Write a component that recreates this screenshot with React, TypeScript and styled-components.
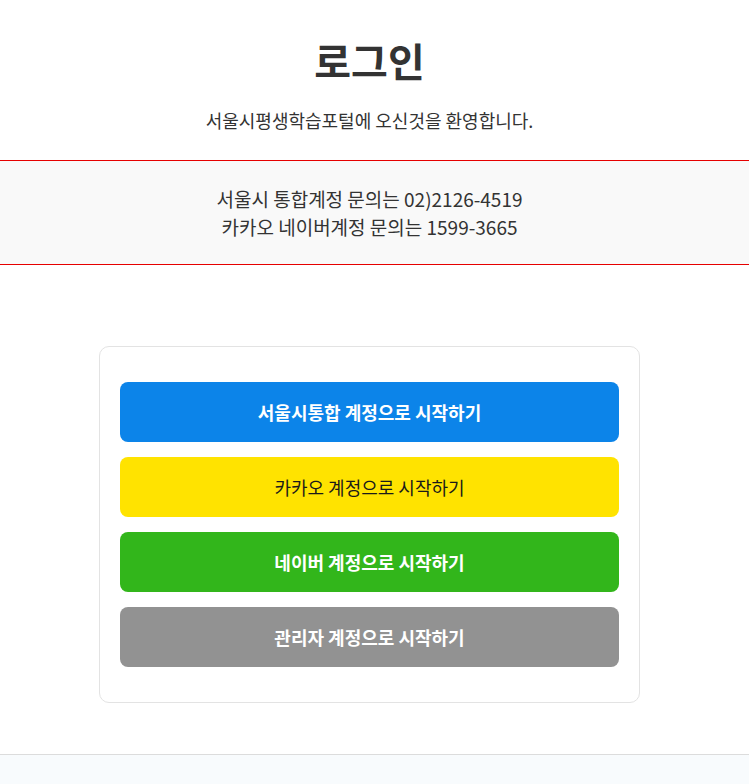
import React from "react";
import styled, { createGlobalStyle } from "styled-components";

const Global = createGlobalStyle`
  html, body { margin: 0; padding: 0; background: #fff; }
  body { font-family: "Noto Sans CJK KR", "Noto Sans", sans-serif; color: #333; }
  * { box-sizing: border-box; }
`;

const Page = styled.div`
  display: flex;
  flex-direction: column;
  min-height: 784px;
`;

const Header = styled.header`
  display: flex;
  flex-direction: column;
  align-items: center;
  padding: 35px 10px 28px 0;
`;

const Title = styled.h1`
  margin: 0;
  font-size: 40px;
  line-height: 50px;
  font-weight: 700;
  color: #333;
`;

const Subtitle = styled.p`
  margin: 23px 0 0;
  font-size: 18px;
  line-height: 24px;
  color: #333;
`;

const InfoBox = styled.section`
  border-top: 1px solid #e60000;
  border-bottom: 1px solid #e60000;
  background: #f9f9f9;
  padding: 24px 10px 23px 0;
  text-align: center;
  font-size: 19px;
  line-height: 28px;
  color: #333;
`;

const InfoLine = styled.div``;

const Main = styled.main`
  display: flex;
  justify-content: center;
  padding: 81px 10px 51px 0;
`;

const Card = styled.div`
  width: 541px;
  border: 1px solid #e3e3e3;
  border-radius: 10px;
  padding: 35px 20px;
  display: flex;
  flex-direction: column;
  gap: 15px;
  background: #fff;
`;

const LoginButton = styled.button<{ $bg: string; $fg: string; $weight: number }>`
  height: 60px;
  width: 100%;
  border: none;
  border-radius: 8px;
  background: ${(p) => p.$bg};
  color: ${(p) => p.$fg};
  font-family: "Noto Sans CJK KR", "Noto Sans", sans-serif;
  font-size: 18px;
  font-weight: ${(p) => p.$weight};
  cursor: pointer;
  display: flex;
  align-items: center;
  justify-content: center;
`;

const Footer = styled.footer`
  flex: 1;
  border-top: 1px solid #dcdcdc;
  background: #f8fbfd;
  min-height: 30px;
`;

const buttons = [
  { label: "서울시통합 계정으로 시작하기", bg: "#0c84e9", fg: "#fff", weight: 700 },
  { label: "카카오 계정으로 시작하기", bg: "#ffe300", fg: "#1a1a1a", weight: 400 },
  { label: "네이버 계정으로 시작하기", bg: "#32b61b", fg: "#fff", weight: 700 },
  { label: "관리자 계정으로 시작하기", bg: "#929292", fg: "#fff", weight: 700 },
];

export default function App() {
  return (
    <Page>
      <Global />
      <Header>
        <Title>로그인</Title>
        <Subtitle>서울시평생학습포털에 오신것을 환영합니다.</Subtitle>
      </Header>
      <InfoBox>
        <InfoLine>서울시 통합계정 문의는 02)2126-4519</InfoLine>
        <InfoLine>카카오 네이버계정 문의는 1599-3665</InfoLine>
      </InfoBox>
      <Main>
        <Card>
          {buttons.map((b) => (
            <LoginButton key={b.label} $bg={b.bg} $fg={b.fg} $weight={b.weight}>
              {b.label}
            </LoginButton>
          ))}
        </Card>
      </Main>
      <Footer />
    </Page>
  );
}
